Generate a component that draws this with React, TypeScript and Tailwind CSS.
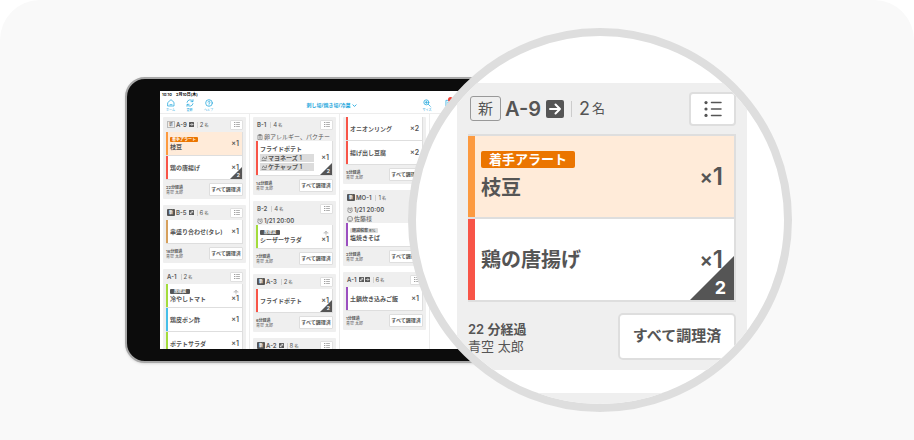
import type { ReactNode } from 'react';

type Tag = 'arrow' | 'link';

interface Dish {
  name: string;
  qty: number;
  bar: string;
  alert?: string;
  label?: string;
  taxLabel?: string;
  options?: string[];
  remaining?: number;
}

interface Order {
  id: string;
  table?: string;
  guests?: number;
  isNew?: 'outline' | 'solid';
  tags?: Tag[];
  notes?: { icon: 'memo' | 'alarm' | 'face'; text: string; strong?: boolean }[];
  dishes: Dish[];
  elapsed?: number;
}

const RED = 'bg-[#f85548]';
const ORANGE = 'bg-[#fc9a40]';
const GREEN = 'bg-[#a3dc3c]';
const BLUE = 'bg-[#47bfe8]';
const PURPLE = 'bg-[#9b4fc0]';
const BROWN = 'bg-[#d6a05c]';

const STAFF = '青空 太郎';

const columns: Order[][] = [
  [
    {
      id: 'a9',
      table: 'A-9',
      guests: 2,
      isNew: 'outline',
      tags: ['arrow'],
      dishes: [
        { name: '枝豆', qty: 1, bar: ORANGE, alert: '着手アラート' },
        { name: '鶏の唐揚げ', qty: 1, bar: RED, remaining: 2 },
      ],
      elapsed: 22,
    },
    {
      id: 'b5',
      table: 'B-5',
      guests: 6,
      isNew: 'solid',
      tags: ['link'],
      dishes: [{ name: '串盛り合わせ(タレ)', qty: 1, bar: BROWN }],
      elapsed: 16,
    },
    {
      id: 'a1',
      table: 'A-1',
      guests: 2,
      dishes: [
        { name: '冷やしトマト', qty: 1, bar: GREEN, label: '席確減' },
        { name: '鶏皮ポン酢', qty: 1, bar: BLUE },
        { name: 'ポテトサラダ', qty: 1, bar: GREEN },
      ],
    },
  ],
  [
    {
      id: 'b1',
      table: 'B-1',
      guests: 4,
      notes: [{ icon: 'memo', text: '卵アレルギー、パクチー' }],
      dishes: [
        {
          name: 'フライドポテト',
          qty: 1,
          bar: RED,
          options: ['マヨネーズ 1', 'ケチャップ 1'],
          remaining: 2,
        },
      ],
      elapsed: 14,
    },
    {
      id: 'b2',
      table: 'B-2',
      guests: 4,
      notes: [{ icon: 'alarm', text: '1/21 20:00', strong: true }],
      dishes: [{ name: 'シーザーサラダ', qty: 1, bar: GREEN, label: '席確減' }],
      elapsed: 7,
    },
    {
      id: 'a3',
      table: 'A-3',
      guests: 2,
      isNew: 'solid',
      dishes: [{ name: 'フライドポテト', qty: 1, bar: RED, remaining: 2 }],
      elapsed: 6,
    },
    {
      id: 'a2',
      table: 'A-2',
      guests: 8,
      isNew: 'solid',
      tags: ['link'],
      dishes: [],
    },
  ],
  [
    {
      id: 'prev',
      dishes: [
        { name: 'オニオンリング', qty: 2, bar: RED },
        { name: '揚げ出し豆腐', qty: 2, bar: RED },
      ],
      elapsed: 5,
    },
    {
      id: 'mo1',
      table: 'MO-1',
      guests: 1,
      isNew: 'solid',
      notes: [
        { icon: 'alarm', text: '1/21 20:00', strong: true },
        { icon: 'face', text: '佐藤様' },
      ],
      dishes: [{ name: '塩焼きそば', qty: 1, bar: PURPLE, taxLabel: '軽減税率 8%' }],
      elapsed: 2,
    },
    {
      id: 'a1-2',
      table: 'A-1',
      guests: 6,
      tags: ['link', 'arrow'],
      dishes: [{ name: '土鍋炊き込みご飯', qty: 1, bar: PURPLE }],
      elapsed: 1,
    },
  ],
];

function ListIcon({ className }: { className: string }) {
  return (
    <svg className={className} viewBox="0 0 18 16" fill="none" stroke="currentColor" strokeWidth="1.5" strokeLinecap="round">
      <path d="M7.5 1.5H17M7.5 8H17M7.5 14.5H17" />
      <g fill="currentColor" stroke="none">
        <circle cx="2" cy="1.6" r="1.6" />
        <circle cx="2" cy="8" r="1.6" />
        <circle cx="2" cy="14.4" r="1.6" />
      </g>
    </svg>
  );
}

function TagIcon({ tag, className }: { tag: Tag; className: string }) {
  return (
    <svg className={className} viewBox="0 0 18 18" fill="none" stroke="#fff" strokeWidth="2" strokeLinecap="round" strokeLinejoin="round">
      <rect width="18" height="18" rx="2" fill="#555" stroke="none" />
      {tag === 'arrow' ? (
        <path d="M4 9H14M9.5 4.5L14 9L9.5 13.5" />
      ) : (
        <path d="M5 13L13 5M8 4.5H13.5V10M4.5 9V13.5H9" />
      )}
    </svg>
  );
}

function NoteIcon({ icon }: { icon: 'memo' | 'alarm' | 'face' }) {
  return (
    <svg className="size-[6px] shrink-0" viewBox="0 0 16 16" fill="none" stroke="currentColor" strokeWidth="1.4">
      {icon === 'memo' && <path d="M2.5 3H13.5V15H2.5ZM5.5 1H10.5V4.5H5.5ZM5.5 8H10.5M5.5 11H10.5" />}
      {icon === 'alarm' && (
        <>
          <circle cx="8" cy="9" r="6" />
          <path d="M8 5.5V9.5H11M1 4L4 1M15 4L12 1" />
        </>
      )}
      {icon === 'face' && (
        <>
          <circle cx="8" cy="8" r="7" />
          <path d="M5 6V7.5M11 6V7.5M4.5 10C6 12.5 10 12.5 11.5 10" />
        </>
      )}
    </svg>
  );
}

function NavButton({ label, children, badge }: { label: string; children: ReactNode; badge?: boolean }) {
  return (
    <button type="button" className="relative flex w-full flex-col items-center gap-px">
      <svg className="size-[8px]" viewBox="0 0 24 24" fill="none" stroke="currentColor" strokeWidth="2.2" strokeLinecap="round" strokeLinejoin="round">
        {children}
      </svg>
      <span className="text-[3px] leading-[4px] whitespace-nowrap">{label}</span>
      {badge && <span className="absolute -top-[2px] right-[7px] size-[5px] rounded-full bg-[#f04438]" />}
    </button>
  );
}

function ScreenHeader() {
  return (
    <header className="border-b border-[#ededed]">
      <div className="flex h-[7px] items-center gap-[4px] px-[2px] text-[4px] font-semibold text-black">
        <span>10:10</span>
        <span>2月10日(木)</span>
      </div>
      <nav className="grid h-[15px] grid-cols-3 items-center text-[#1ba5dc]">
        <div className="grid w-[58px] grid-cols-3 pl-px">
          <NavButton label="ホーム">
            <path d="M3 10L12 2L21 10V21H3ZM9 17H15" />
          </NavButton>
          <NavButton label="更新">
            <path d="M3 10A9.5 9.5 0 0 1 20 6.5M21 2V8H15M21 14A9.5 9.5 0 0 1 4 17.5M3 22V16H9" />
          </NavButton>
          <NavButton label="ヘルプ">
            <circle cx="12" cy="12" r="10" />
            <path d="M9 9.5C9 5.5 15 5.5 15 9.5C15 12 12 12 12 14M12 17.5V18" />
          </NavButton>
        </div>
        <button type="button" className="flex items-center justify-center gap-[2px] text-[5px] font-bold whitespace-nowrap">
          刺し場/焼き場/冷菜
          <svg className="size-[5px]" viewBox="0 0 8 8" fill="none" stroke="currentColor" strokeWidth="1.4">
            <path d="M1 2.5L4 5.5L7 2.5" />
          </svg>
        </button>
        <div className="mr-[44px] ml-auto grid w-[44px] grid-cols-2">
          <NavButton label="サイズ">
            <circle cx="10" cy="10" r="7.5" />
            <path d="M16 16L22 22M10 6.5V13.5M6.5 10H13.5" />
          </NavButton>
          <NavButton label="注文" badge>
            <path d="M4 4H20V22H4ZM8 10H16M8 15H16" />
          </NavButton>
        </div>
      </nav>
    </header>
  );
}

function DishRow({ dish }: { dish: Dish }) {
  return (
    <li className={`relative flex min-h-[24px] border-r border-b border-[#dedede] ${dish.alert ? 'bg-[#ffebd9]' : 'bg-white'}`}>
      <span className={`w-[2px] shrink-0 ${dish.bar}`} />
      <div className="flex min-w-0 flex-1 flex-col items-start justify-center gap-px py-1 pl-[2px] text-[6px] leading-[8px] font-semibold whitespace-nowrap">
        {dish.alert && <span className="rounded-[1px] bg-[#eb7500] px-[2px] text-[4px] leading-[5px] text-white">{dish.alert}</span>}
        {dish.label && <span className="rounded-[1px] bg-[#555] px-[4px] text-[4px] leading-[5px] text-white">{dish.label}</span>}
        {dish.taxLabel && <span className="rounded-[1px] bg-[#dedede] px-[2px] text-[4px] leading-[5px]">{dish.taxLabel}</span>}
        <span>{dish.name}</span>
        {dish.options?.map((option) => (
          <span key={option} className="flex w-[54px] items-center gap-px bg-[#dcdcdc] px-px">
            <svg className="size-[6px] shrink-0" viewBox="0 0 10 10" fill="none" stroke="currentColor">
              <path d="M1 9H9M2 7L4 3L6 6H9V2" />
            </svg>
            {option}
          </span>
        ))}
      </div>
      <div className="flex flex-col items-end justify-center pr-[3px]">
        {dish.label && (
          <svg className="size-[6px]" viewBox="0 0 12 12" fill="none" stroke="#999">
            <path d="M1 6H11M6 2V11M3 6L6 2L9 6" />
          </svg>
        )}
        <span className="text-[7px] leading-[8px] font-semibold">
          ×{dish.qty}
        </span>
      </div>
      {dish.remaining && (
        <span className="absolute right-0 bottom-0 flex size-[12px] items-end justify-end bg-[#555] pr-[2px] text-[5px] leading-[7px] font-bold text-white [clip-path:polygon(100%_0,100%_100%,0_100%)]">
          {dish.remaining}
        </span>
      )}
    </li>
  );
}

function OrderCard({ order }: { order: Order }) {
  return (
    <article className="rounded-[1px] bg-[#efefef] px-[3px]">
      {order.table && (
        <div className="flex h-[15px] items-center gap-px pl-px text-[6px] leading-none">
          {order.isNew === 'outline' && <span className="border border-[#bbb] px-px text-[4px] leading-[5px]">新</span>}
          {order.isNew === 'solid' && <span className="rounded-[1px] bg-[#555] px-[2px] text-[4px] leading-[7px] font-bold text-white">新</span>}
          <span className="pr-px font-semibold">{order.table}</span>
          {order.tags?.map((tag) => <TagIcon key={tag} tag={tag} className="size-[5px]" />)}
          <span className="ml-[2px] border-l border-[#d0d0d0] pl-[2px]">
            {order.guests}
            <span className="text-[4px]"> 名</span>
          </span>
          <button type="button" aria-label="一覧" className="ml-auto flex h-[10px] w-[13px] items-center justify-center rounded-[1px] border border-[#e0e0e0] bg-white">
            <ListIcon className="h-[5px] w-[6px]" />
          </button>
        </div>
      )}
      {order.notes?.map((note) => (
        <p key={note.text} className={`flex h-[9px] items-center gap-px pl-px text-[6px] leading-[6px] whitespace-nowrap ${note.strong ? 'font-semibold' : ''}`}>
          <NoteIcon icon={note.icon} />
          {note.text}
        </p>
      ))}
      <ul>
        {order.dishes.map((dish) => (
          <DishRow key={dish.name} dish={dish} />
        ))}
      </ul>
      {order.elapsed && (
        <div className="flex h-[19px] items-center justify-between">
          <p className="text-[4px] leading-[5px]">
            <strong className="block font-semibold">{order.elapsed}分経過</strong>
            {STAFF}
          </p>
          <button type="button" className="h-[13px] w-[34px] rounded-[1px] border border-[#dedede] bg-white text-[5px] leading-none font-semibold whitespace-nowrap">
            すべて調理済
          </button>
        </div>
      )}
    </article>
  );
}

function Tablet() {
  return (
    <div className="shrink-0 rounded-[20px] border-2 border-[#a8a8a8] bg-[#0c0c0c] px-[33px] py-[12px] shadow-sm">
      <div className="flex h-[258px] w-[344px] flex-col overflow-hidden bg-white">
        <ScreenHeader />
        <main className="flex min-h-0 flex-1">
          {columns.map((orders, i) => (
            <section key={i} className="flex w-[90px] shrink-0 flex-col gap-[6px] border-r border-[#ededed] px-[3px] pt-[3px]">
              {orders.map((order) => (
                <OrderCard key={order.id} order={order} />
              ))}
            </section>
          ))}
        </main>
      </div>
    </div>
  );
}

function Quantity({ value }: { value: number }) {
  return (
    <span className="flex items-center pr-[11px] text-2xl font-semibold">
      <span className="text-xl">×</span>
      {value}
    </span>
  );
}

function Magnifier() {
  return (
    <div className="relative -ml-[131px] flex size-96 shrink-0 flex-col gap-[23px] overflow-hidden rounded-full border-8 border-[#dedede] bg-white pt-[47px] pr-[37px] pl-[41px]">
      <article className="bg-[#efefef] px-[11px]">
        <div className="flex h-[51px] items-center pl-[2px]">
          <span className="rounded-[3px] border border-[#999] px-[7px] text-[15px] leading-[23px]">新</span>
          <span className="ml-1 text-xl font-semibold">A-9</span>
          <TagIcon tag="arrow" className="ml-[5px] size-[18px]" />
          <span className="mx-[7px] h-4 w-px bg-[#ccc]" />
          <span className="text-lg">2</span>
          <span className="ml-[2px] text-[13px]">名</span>
          <button type="button" aria-label="一覧" className="ml-auto flex h-[34px] w-[47px] items-center justify-center rounded border-2 border-[#dedede] bg-white">
            <ListIcon className="h-4 w-[18px]" />
          </button>
        </div>
        <ul className="border-t-2 border-r-2 border-[#dedede]">
          <li className="flex h-[83px] border-b-2 border-[#dedede] bg-[#ffebd9]">
            <span className="w-[7px] bg-[#fc9a40]" />
            <div className="flex flex-1 flex-col items-start justify-center gap-[6px] pl-[6px]">
              <span className="rounded-[2px] bg-[#eb7500] px-2 text-[13px] leading-[17px] font-bold text-white">着手アラート</span>
              <span className="text-xl leading-7 font-bold">枝豆</span>
            </div>
            <Quantity value={1} />
          </li>
          <li className="relative flex h-[83px] border-b-2 border-[#dedede] bg-white">
            <span className="w-[7px] bg-[#f85548]" />
            <span className="flex flex-1 items-center pl-[6px] text-xl font-bold">鶏の唐揚げ</span>
            <Quantity value={1} />
            <span className="absolute right-0 bottom-0 flex size-[44px] items-end justify-end bg-[#555] pr-2 text-lg leading-6 font-bold text-white [clip-path:polygon(100%_0,100%_100%,0_100%)]">
              2
            </span>
          </li>
        </ul>
        <div className="flex h-[68px] items-center justify-between">
          <p className="pt-[3px] text-[13px] leading-[17px]">
            <strong className="block font-semibold">22 分経過</strong>
            {STAFF}
          </p>
          <button type="button" className="h-[47px] w-[118px] rounded-[5px] border-2 border-[#dedede] bg-white text-[15px] font-bold">
            すべて調理済
          </button>
        </div>
      </article>
      <div className="flex-1 bg-[#efefef]" />
    </div>
  );
}

export default function App() {
  return (
    <div className="bg-white">
      <div
        lang="ja"
        className="flex min-h-screen items-center justify-center overflow-hidden rounded-t-[40px] bg-[#f9f9f9] pl-[3px] font-['Inter','Noto_Sans_CJK_JP',sans-serif] text-[#555]"
      >
        <Tablet />
        <Magnifier />
      </div>
    </div>
  );
}
